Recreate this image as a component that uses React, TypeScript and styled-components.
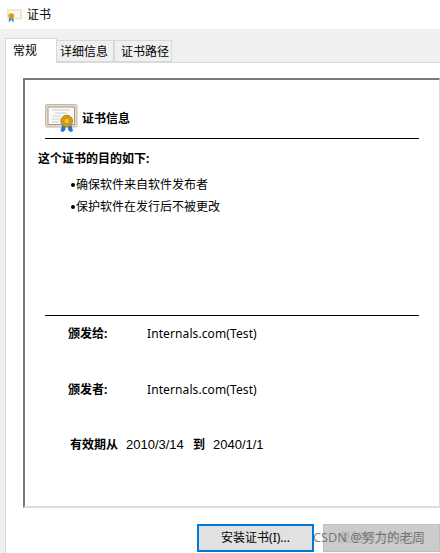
import React from 'react';
import styled, { createGlobalStyle } from 'styled-components';

const GlobalStyle = createGlobalStyle`
  html, body {
    margin: 0;
    padding: 0;
    background: #fff;
  }
  * {
    box-sizing: border-box;
  }
`;

const Window = styled.div`
  width: 440px;
  height: 553px;
  overflow: hidden;
  position: relative;
  display: flex;
  flex-direction: column;
  background: #f0f0f0;
  color: #000;
  font-family: 'Noto Sans', 'Noto Sans CJK SC', sans-serif;
  font-size: 12px;
  line-height: 16px;
`;

const TitleBar = styled.div`
  height: 29px;
  flex: none;
  display: flex;
  align-items: center;
  gap: 5px;
  padding-left: 7px;
  background: #fff;
`;

const TitleIcon = styled.svg`
  width: 15px;
  height: 13px;
  margin-top: 2px;
`;

const TabStrip = styled.div`
  height: 33px;
  flex: none;
  display: flex;
  align-items: flex-end;
  padding-left: 5px;
  position: relative;
  z-index: 1;
`;

const ActiveTab = styled.div`
  width: 52px;
  height: 25px;
  margin-bottom: -1px;
  padding: 4px 0 0 7px;
  background: #fff;
  border: 1px solid #d9d9d9;
  border-bottom: none;
`;

const Tab = styled.div<{ $inset: number; $width: number }>`
  width: ${(p) => p.$width}px;
  height: 22px;
  padding: 3px 0 0 ${(p) => p.$inset}px;
  border: 1px solid #d9d9d9;
  border-left-width: ${(p) => (p.$inset > 4 ? 1 : 0)}px;
`;

const TabPanel = styled.div`
  flex: 1;
  margin-left: 5px;
  padding: 15px 0 0 17px;
  background: #fff;
  border-top: 1px solid #d9d9d9;
  border-left: 1px solid #d9d9d9;
  display: flex;
  flex-direction: column;
`;

const InfoBox = styled.div`
  height: 430px;
  flex: none;
  padding: 24px 20px 0 13px;
  border-top: 2px solid #7a7a7a;
  border-left: 2px solid #7a7a7a;
  border-right: 1px solid #dcdcdc;
  border-bottom: 2px solid #dcdcdc;
  display: flex;
  flex-direction: column;
`;

const Heading = styled.div`
  margin-left: 7px;
  height: 35px;
  display: flex;
  align-items: flex-start;
  gap: 4px;
  border-bottom: 1px solid #000;
  font-weight: 700;
`;

const HeadingIcon = styled.svg`
  width: 33px;
  height: 29px;
  flex: none;
`;

const HeadingText = styled.span`
  margin-top: 7px;
`;

const Purpose = styled.div`
  margin-top: 12px;
  font-weight: 700;
`;

const BulletList = styled.ul`
  list-style: none;
  margin: 10px 0 0;
  padding: 0 0 0 33px;
  height: 138px;
  display: flex;
  flex-direction: column;
  gap: 6px;
`;

const Bullet = styled.li`
  display: flex;
  align-items: center;
  gap: 1px;
  &::before {
    content: '';
    width: 4px;
    height: 4px;
    border-radius: 50%;
    background: #000;
  }
`;

const Divider = styled.div`
  height: 1px;
  flex: none;
  margin-left: 7px;
  background: #000;
`;

const FieldRow = styled.div<{ $top: number }>`
  display: flex;
  margin-top: ${(p) => p.$top}px;
  padding-left: 30px;
`;

const FieldLabel = styled.span`
  width: 79px;
  font-weight: 700;
`;

const FieldValue = styled.span`
  letter-spacing: 0.1px;
`;

const Validity = styled.div`
  display: flex;
  margin-top: 39px;
  padding-left: 32px;
`;

const ValidityWord = styled.span<{ $width: number }>`
  width: ${(p) => p.$width}px;
  font-weight: 700;
`;

const ValidityDate = styled.span<{ $width?: number }>`
  width: ${(p) => (p.$width ? `${p.$width}px` : 'auto')};
  font-family: 'Liberation Sans', 'Noto Sans', sans-serif;
  font-size: 13px;
`;

const ButtonRow = styled.div`
  display: flex;
  gap: 9px;
  margin: 16px 0 0 174px;
`;

const DialogButton = styled.div<{ $primary?: boolean }>`
  width: 117px;
  height: 28px;
  flex: none;
  display: flex;
  align-items: center;
  justify-content: center;
  background: ${(p) => (p.$primary ? '#e1e1e1' : '#cccccc')};
  border: ${(p) => (p.$primary ? '2px solid #0078d7' : '1px solid #bfbfbf')};
  color: ${(p) => (p.$primary ? '#000' : '#adadad')};
`;

const Watermark = styled.div`
  position: absolute;
  left: 313px;
  top: 529px;
  color: rgba(85, 85, 85, 0.72);
  font-size: 12.7px;
  white-space: nowrap;
`;

// certificate with the gold seal and blue ribbons
const CertArt = () => (
  <>
    <rect x="0.5" y="0.5" width="31.5" height="22.5" rx="1.5" fill="#e4dccb" stroke="#c3b8a3" />
    <rect x="3" y="3" width="26.5" height="17.5" fill="#fbfaf6" stroke="#a89a80" />
    <path d="M7 6h18M10 9h12M7 12h9M7 15h8M7 18h7" stroke="#c8cdd6" strokeWidth="1" />
    <path d="M17.5 20l-2 7 2.5 1 2-1.5 1-5zM26 20l2 7-2.5 1-2-1.5-1-5z" fill="#2272e6" />
    <circle cx="21.7" cy="17" r="5.8" fill="#d69c12" stroke="#b57f08" />
    <circle cx="21.7" cy="17" r="2.8" fill="#f0c53a" stroke="#b98a10" strokeWidth="0.8" />
  </>
);

const App = () => (
  <Window>
    <GlobalStyle />
    <TitleBar>
      <TitleIcon viewBox="0 0 15 13">
        <rect x="0" y="0" width="15" height="10.5" fill="#efe4d0" />
        <rect x="2" y="1.5" width="11" height="7.5" fill="#fbf7ee" />
        <path d="M2.5 8.5l-1 4.5 2-1 1-3zM6 8.5l1 4.5-2-1-1-3z" fill="#2f7ae0" />
        <circle cx="4.3" cy="7" r="2.8" fill="#d69c12" />
      </TitleIcon>
      <span>证书</span>
    </TitleBar>
    <TabStrip>
      <ActiveTab>常规</ActiveTab>
      <Tab $width={57} $inset={3}>详细信息</Tab>
      <Tab $width={58} $inset={6}>证书路径</Tab>
    </TabStrip>
    <TabPanel>
      <InfoBox>
        <Heading>
          <HeadingIcon viewBox="0 0 33 29">
            <CertArt />
          </HeadingIcon>
          <HeadingText>证书信息</HeadingText>
        </Heading>
        <Purpose>这个证书的目的如下:</Purpose>
        <BulletList>
          <Bullet>确保软件来自软件发布者</Bullet>
          <Bullet>保护软件在发行后不被更改</Bullet>
        </BulletList>
        <Divider />
        <FieldRow $top={10}>
          <FieldLabel>颁发给:</FieldLabel>
          <FieldValue>Internals.com(Test)</FieldValue>
        </FieldRow>
        <FieldRow $top={40}>
          <FieldLabel>颁发者:</FieldLabel>
          <FieldValue>Internals.com(Test)</FieldValue>
        </FieldRow>
        <Validity>
          <ValidityWord $width={56}>有效期从</ValidityWord>
          <ValidityDate $width={67}>2010/3/14</ValidityDate>
          <ValidityWord $width={20}>到</ValidityWord>
          <ValidityDate>2040/1/1</ValidityDate>
        </Validity>
      </InfoBox>
      <ButtonRow>
        <DialogButton $primary>安装证书(I)...</DialogButton>
        <DialogButton>复制到文件(C)...</DialogButton>
      </ButtonRow>
    </TabPanel>
    <Watermark>CSDN @努力的老周</Watermark>
  </Window>
);

export default App;
